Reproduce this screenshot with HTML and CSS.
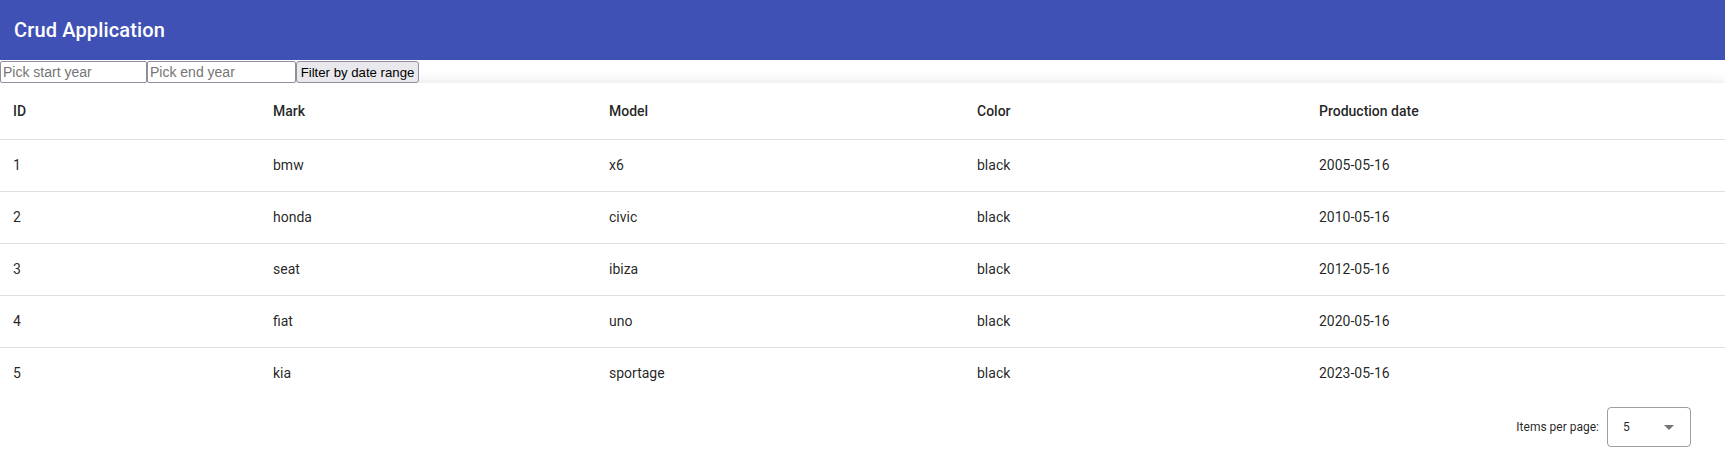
FILE: index.html
```html
<!DOCTYPE html>
<html lang="en">
<head>
<meta charset="utf-8">
<title>Crud Application</title>
<link rel="stylesheet" href="styles.css">
</head>
<body>
<header class="toolbar">
  <span class="toolbar-title">Crud Application</span>
</header>
<div class="filter-bar">
  <input class="year-input start-input" type="text" placeholder="Pick start year">
  <input class="year-input end-input" type="text" placeholder="Pick end year">
  <button class="filter-btn" type="button">Filter by date range</button>
</div>
<div class="table-card">
  <table class="data-table">
    <colgroup>
      <col class="c-id"><col class="c-mark"><col class="c-model"><col class="c-color"><col class="c-date">
    </colgroup>
    <thead>
      <tr class="header-row">
        <th>ID</th><th>Mark</th><th>Model</th><th>Color</th><th>Production date</th>
      </tr>
    </thead>
    <tbody>
      <tr><td>1</td><td>bmw</td><td>x6</td><td>black</td><td>2005-05-16</td></tr>
      <tr><td>2</td><td>honda</td><td>civic</td><td>black</td><td>2010-05-16</td></tr>
      <tr><td>3</td><td>seat</td><td>ibiza</td><td>black</td><td>2012-05-16</td></tr>
      <tr><td>4</td><td>fiat</td><td>uno</td><td>black</td><td>2020-05-16</td></tr>
      <tr><td>5</td><td>kia</td><td>sportage</td><td>black</td><td>2023-05-16</td></tr>
    </tbody>
  </table>
  <div class="paginator">
    <span class="page-size-label">Items per page:</span>
    <div class="page-size-select">
      <span class="page-size-value">5</span>
      <span class="select-arrow"></span>
    </div>
  </div>
</div>
</body>
</html>
```
FILE: styles.css
```css
html, body {
  margin: 0;
  padding: 0;
  background: #ffffff;
}

body {
  font-family: Roboto, "Liberation Sans", Arial, sans-serif;
  overflow: hidden;
}

.toolbar {
  height: 60px;
  background: #3f51b5;
  color: #ffffff;
  display: flex;
  align-items: center;
  padding: 0 14px;
  box-sizing: border-box;
}

.toolbar-title {
  font-size: 20px;
  font-weight: 500;
  letter-spacing: 0.15px;
}

.filter-bar {
  height: 23px;
  display: flex;
  align-items: flex-start;
  padding-top: 1px;
  box-sizing: border-box;
}

.year-input {
  box-sizing: border-box;
  height: 22px;
  margin: 0;
  padding: 1px 2px;
  border: 1px solid #8f8f9d;
  border-radius: 2px;
  font-family: "Liberation Sans", Arial, sans-serif;
  font-size: 14px;
  color: #000;
  background: #fff;
}

.start-input { width: 147px; }
.end-input { width: 149px; }

.year-input::placeholder {
  color: #757575;
}

.filter-btn {
  box-sizing: border-box;
  width: 123px;
  height: 22px;
  margin: 0;
  padding: 0 2px;
  white-space: nowrap;
  border: 1px solid #8f8f9d;
  border-radius: 3px;
  background: #e9e9ed;
  font-family: "Liberation Sans", Arial, sans-serif;
  font-size: 13.2px;
  color: #000;
}

.table-card {
  background: #fff;
  box-shadow: 0 5px 5px -3px rgba(0,0,0,.2), 0 8px 10px 1px rgba(0,0,0,.14), 0 3px 14px 2px rgba(0,0,0,.12);
}

.data-table {
  width: 100%;
  border-collapse: collapse;
  table-layout: fixed;
  color: rgba(0,0,0,.87);
  font-size: 14px;
}

.c-id { width: 260px; }
.c-mark { width: 336px; }
.c-model { width: 368px; }
.c-color { width: 342px; }

.data-table th,
.data-table td {
  text-align: left;
  padding: 0 16px 0 13px;
  border-bottom: 1px solid rgba(0,0,0,.12);
  box-sizing: border-box;
  vertical-align: middle;
}

.data-table th {
  height: 56px;
  font-weight: 500;
}

.data-table td {
  height: 52px;
  font-weight: 400;
}

.data-table tbody tr:last-child td {
  border-bottom: none;
}

.paginator {
  height: 56px;
  display: flex;
  align-items: center;
  justify-content: flex-end;
  padding-right: 34px;
  font-size: 12px;
  color: rgba(0,0,0,.87);
}

.page-size-label {
  margin-right: 8px;
}

.page-size-select {
  box-sizing: border-box;
  width: 84px;
  height: 40px;
  border: 1px solid rgba(0,0,0,.38);
  border-radius: 4px;
  display: flex;
  align-items: center;
  justify-content: space-between;
  padding: 0 16px 0 15px;
  font-size: 12px;
}

.select-arrow {
  width: 0;
  height: 0;
  border-left: 5px solid transparent;
  border-right: 5px solid transparent;
  border-top: 5px solid rgba(0,0,0,.54);
}
```
